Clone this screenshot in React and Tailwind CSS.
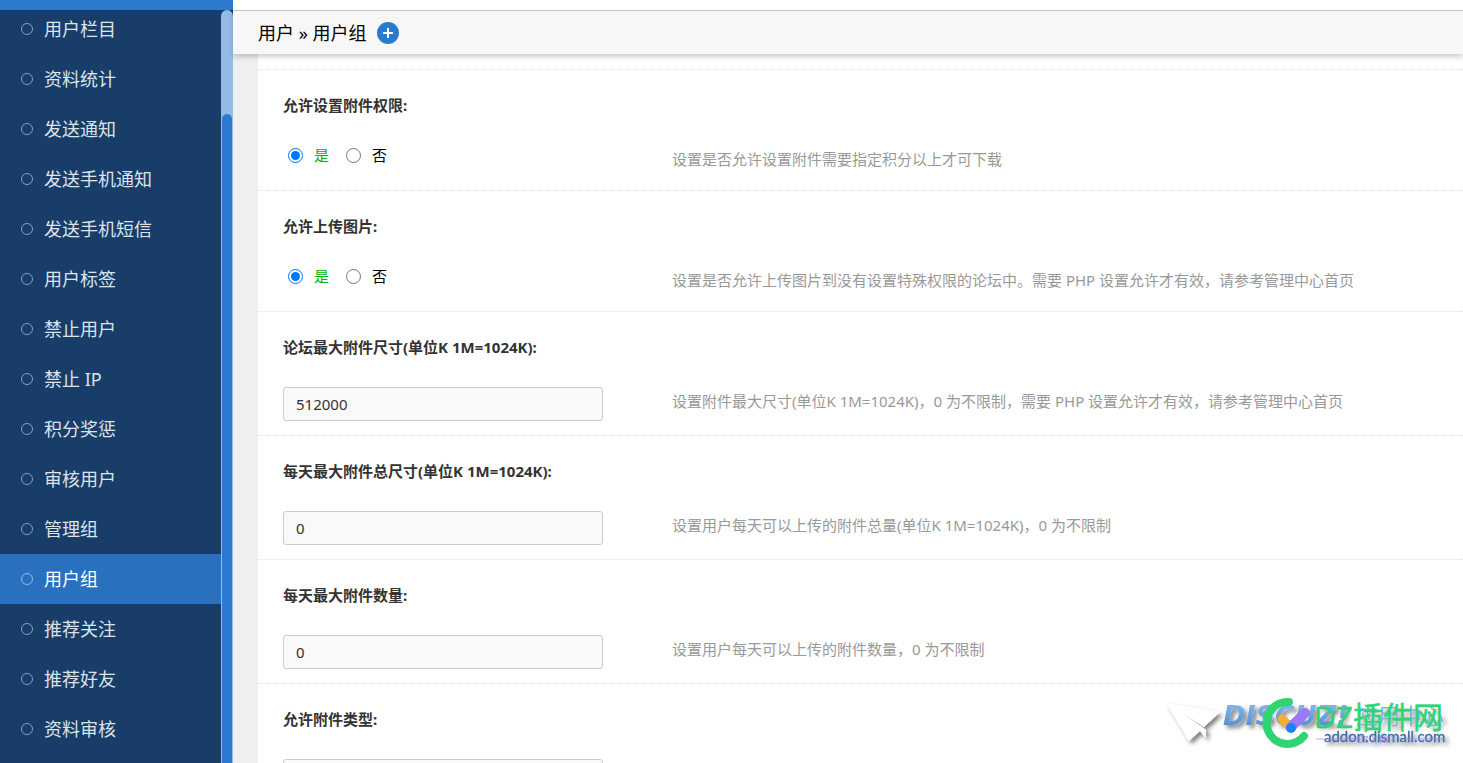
import clsx from 'clsx';

const navItems = [
  '用户栏目',
  '资料统计',
  '发送通知',
  '发送手机通知',
  '发送手机短信',
  '用户标签',
  '禁止用户',
  '禁止 IP',
  '积分奖惩',
  '审核用户',
  '管理组',
  '用户组',
  '推荐关注',
  '推荐好友',
  '资料审核',
];

const settings = [
  {
    name: 'allowsetattachperm',
    type: 'radio',
    label: '允许设置附件权限:',
    hint: '设置是否允许设置附件需要指定积分以上才可下载',
  },
  {
    name: 'allowpostimage',
    type: 'radio',
    label: '允许上传图片:',
    hint: '设置是否允许上传图片到没有设置特殊权限的论坛中。需要 PHP 设置允许才有效，请参考管理中心首页',
  },
  {
    name: 'maxattachsize',
    type: 'text',
    label: '论坛最大附件尺寸(单位K 1M=1024K):',
    value: '512000',
    hint: '设置附件最大尺寸(单位K 1M=1024K)，0 为不限制，需要 PHP 设置允许才有效，请参考管理中心首页',
  },
  {
    name: 'maxsizeperday',
    type: 'text',
    label: '每天最大附件总尺寸(单位K 1M=1024K):',
    value: '0',
    hint: '设置用户每天可以上传的附件总量(单位K 1M=1024K)，0 为不限制',
  },
  {
    name: 'maxattachnum',
    type: 'text',
    label: '每天最大附件数量:',
    value: '0',
    hint: '设置用户每天可以上传的附件数量，0 为不限制',
  },
  {
    name: 'attachextensions',
    type: 'text',
    label: '允许附件类型:',
    value: '',
    hint: '',
  },
];

const Sidebar = () => (
  <aside className="w-[233px] shrink-0 flex flex-col bg-[#183d68]">
    <div className="h-[10px] shrink-0 bg-[#2b7acd]"></div>
    <div className="flex-1 min-h-0 flex">
      <nav className="flex-1 overflow-hidden">
        {/* The list is scrolled a little, so the first row is cut */}
        <ul className="-mt-[6px]">
          {navItems.map((label) => {
            const isActive = label === '用户组';

            return (
              <li key={label}>
                <a
                  href="#"
                  className={clsx(
                    'flex items-center gap-[11px] h-[50px] pl-[21px] text-lg',
                    isActive ? 'bg-[#2970bf] text-white' : 'text-[#dce3eb]'
                  )}
                >
                  <span className="w-3 h-3 rounded-full border border-white/50"></span>
                  <span>{label}</span>
                </a>
              </li>
            );
          })}
        </ul>
      </nav>

      {/* Scrollbar */}
      <div className="w-3 flex flex-col rounded-t-full bg-[#94bbe6] pt-[104px] px-px">
        <div className="flex-1 rounded-t-full bg-[#2b7acd]"></div>
      </div>
    </div>
  </aside>
);

const YesNo = ({ name }) => (
  <div className="flex items-center h-5 pl-[5px]">
    <input id={`${name}-1`} type="radio" name={name} defaultChecked className="w-[15px] h-[15px]" />
    <label htmlFor={`${name}-1`} className="ml-[11px] text-[#00b400]">是</label>
    <input id={`${name}-0`} type="radio" name={name} className="ml-[17px] w-[15px] h-[15px]" />
    <label htmlFor={`${name}-0`} className="ml-[11px] text-black">否</label>
  </div>
);

const SettingRow = ({ item }) => {
  const isRadio = item.type === 'radio';

  return (
    <div
      className={clsx(
        'shrink-0 border-t border-dotted border-[#d5e6f2] px-[25px] pt-[25px]',
        isRadio ? 'h-[121px]' : 'h-[124px]'
      )}
    >
      {isRadio ? (
        <div id={`${item.name}-label`} className="font-bold text-[#333]">{item.label}</div>
      ) : (
        <label htmlFor={item.name} className="block font-bold text-[#333]">{item.label}</label>
      )}
      <div className="flex mt-[30px]">
        <div className="w-[389px] shrink-0">
          {isRadio ? (
            <div role="radiogroup" aria-labelledby={`${item.name}-label`}>
              <YesNo name={item.name} />
            </div>
          ) : (
            <input
              id={item.name}
              type="text"
              defaultValue={item.value}
              className="block w-[320px] h-[34px] px-3 rounded-[3px] border border-[#ccc] bg-[#f9f9f9] text-[#333]"
            />
          )}
        </div>
        <p className="mt-1 text-[#999]">{item.hint}</p>
      </div>
    </div>
  );
};

const Watermark = () => (
  <svg
    className="absolute right-0 bottom-0 pointer-events-none"
    width="313"
    height="83"
    viewBox="0 0 313 83"
    fontFamily="'Open Sans', 'Noto Sans CJK SC', sans-serif"
  >
    <defs>
      <filter id="soft" x="-20%" y="-20%" width="150%" height="150%">
        <feDropShadow dx="3" dy="3" stdDeviation="2" floodColor="#000" floodOpacity="0.5" />
      </filter>
      <linearGradient id="blue" x1="0" y1="0" x2="0" y2="1">
        <stop offset="0" stopColor="#8bbcf0" />
        <stop offset="1" stopColor="#4a8acb" />
      </linearGradient>
    </defs>
    <g filter="url(#soft)">
      <path d="M16 23 L70 32 L54 47 L34 34 L56 50 L56 58 L50 51 L39 61 Z" fill="#fff" />
      <text x="73" y="45" fontSize="27" fontWeight="700" fontStyle="italic" fontFamily="'DejaVu Sans', sans-serif" fill="url(#blue)">DISCUZ!</text>
      <text x="206" y="44" fontSize="22" fill="#82afe2">应用中心</text>
    </g>
    <text x="174" y="62" fontSize="15" fontFamily="Lato, sans-serif" fill="#3b6ea8" stroke="#3b6ea8" strokeWidth="0.3" filter="url(#soft)">addon.dismall.com</text>
    <g opacity="0.7">
      <path d="M166 59 H206 M255 59 H295" stroke="#a68bf4" strokeWidth="1" />
      <text x="207" y="63" fontSize="9" fill="#9b78f4">DZ-X.NET</text>
    </g>
    <g fill="none" strokeLinecap="round">
      <path d="M139 22 A21 21 0 1 0 154 56" stroke="#2fd573" strokeWidth="8" />
      <path d="M132 39 L140 47" stroke="#f5ae35" strokeWidth="9" />
      <path d="M155 33 L141 47" stroke="#9b78f4" strokeWidth="10" />
    </g>
    <circle cx="141" cy="48" r="5" fill="#1684fc" />
    <text x="164" y="48" fontSize="30" fill="#2fd573" stroke="#2fd573" strokeWidth="0.5">DZ插件网</text>
  </svg>
);

const App = () => (
  <div className="relative flex h-screen overflow-hidden bg-white text-[15px] leading-5 font-['Noto_Sans','Noto_Sans_CJK_SC',sans-serif]">
    <Sidebar />

    <main className="flex-1 min-w-0 flex flex-col pt-[10px]">
      <header className="relative shrink-0 flex items-center gap-[10px] h-11 pl-[25px] border-t border-[#c5c5c5] bg-[#f7f7f7] shadow-[0_3px_5px_rgba(0,0,0,0.2)]">
        <h1 className="text-lg text-black">用户 » 用户组</h1>
        <button
          type="button"
          aria-label="添加"
          className="flex items-center justify-center w-[22px] h-[22px] rounded-full bg-[#2b7acd]"
        >
          <svg width="10" height="10" viewBox="0 0 10 10" stroke="#fff" strokeWidth="2">
            <path d="M5 0 V10 M0 5 H10" />
          </svg>
        </button>
      </header>

      <div className="flex-1 min-h-0 pl-[25px] bg-[#efefef]">
        <form className="h-full overflow-hidden flex flex-col pt-[15px] bg-white">
          {settings.map((item) => (
            <SettingRow key={item.name} item={item} />
          ))}
        </form>
      </div>
    </main>

    <Watermark />
  </div>
);

export default App;
